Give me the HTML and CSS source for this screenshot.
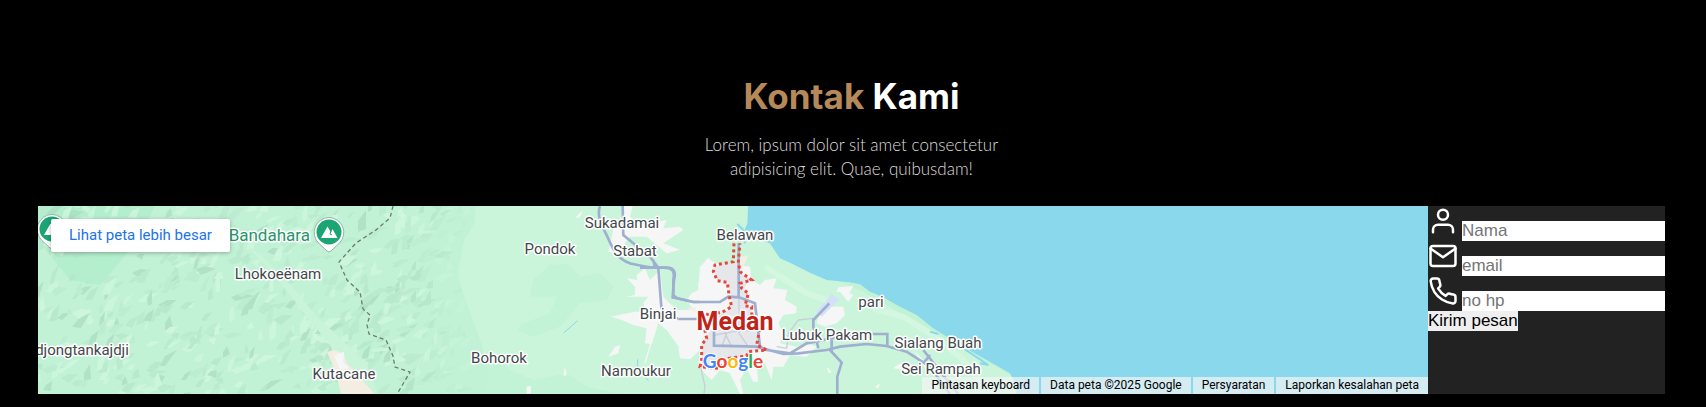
FILE: index.html
```html
<!DOCTYPE html>
<html lang="id">
<head>
<meta charset="utf-8">
<meta name="viewport" content="width=device-width, initial-scale=1">
<title>Kontak Kami</title>
<link rel="stylesheet" href="styles.css">
</head>
<body>
<section class="contact" id="contact">
  <h2 class="contact-title"><span>Kontak</span> Kami</h2>
  <p class="contact-text">Lorem, ipsum dolor sit amet consectetur adipisicing elit. Quae, quibusdam!</p>
  <div class="row">
    <div class="map">
      <svg class="map-canvas" viewBox="38 206 1390 188" preserveAspectRatio="xMidYMid slice" role="img" aria-label="Peta Medan">
        <defs>
          <linearGradient id="fade" x1="0" x2="1" y1="0" y2="0">
            <stop offset="0" stop-color="#fff"/><stop offset=".8" stop-color="#fff"/><stop offset="1" stop-color="#000"/>
          </linearGradient>
          <mask id="hills" maskUnits="userSpaceOnUse" x="38" y="206" width="450" height="188"><rect x="38" y="206" width="450" height="188" fill="url(#fade)"/></mask>
        </defs>
        <rect x="38" y="206" width="1390" height="188" fill="#c2f2d6"/>
        <path d="M38 206H155L140 235L120 262L100 285L70 280L50 255L38 240Z" fill="#b3eecd"/>
        <g id="terrain" mask="url(#hills)"></g>
        <!-- valley -->
        <path d="M246 245L268 268L330 345L350 394H378L366 362L318 318L290 284L262 256Z" fill="#c9f4da"/>
        <path d="M327 352L334 350L344 354L346 362L358 376L375 394H341L336 373Z" fill="#f3ede2"/>
        <path d="M334 355L344 352L343 362L349 368L340 370Z" fill="#f5f6f7"/>
        <!-- lowlands -->
        <path d="M476 206H748V224L768 243L781 259L860 290L1012 376L1018 394H486L488 372L482 345L470 312L462 290L458 272L464 240L474 225Z" fill="#caf5db"/>
        <g transform="translate(400 200) scale(.3333)">
          <path d="M400 240L450 195L500 190L540 230L600 220L640 260L620 300L540 310L480 380L400 410L350 390L370 370L450 340L470 290L390 290Z" fill="#c3f3d7"/>
          <path d="M260 450L330 510L400 540L500 520L560 560L660 582H260Z" fill="#c3f3d7"/>
          <path d="M490 400L533 362" stroke="#8ad8ec" stroke-width="3"/>
          <path d="M713 478V505L745 542" stroke="#8ad8ec" stroke-width="3" fill="none"/>
          <path d="M670 18H698L690 50L720 75L800 60L790 85L840 80L850 90L790 130L840 150L800 160L770 135L740 110L690 110L650 160L625 155L640 90L660 60ZM548 30L540 52L525 55ZM780 210L750 240L735 205L710 225L712 240L680 235L705 260L705 285L680 290L745 290L730 310L740 335L705 335L632 350L660 358L700 375L740 385L735 430L755 433L775 370L800 390L835 438L840 475L870 478L900 450L910 250L930 170L900 200L895 270L875 280L860 300L880 330L830 330L790 290ZM660 435L655 460L625 470L645 440ZM495 500L500 525L490 528ZM380 560L393 558L392 582H380Z" fill="#f6f6f7"/>
          <path d="M770 370L735 490" stroke="#f6f6f7" stroke-width="4"/>
          <path d="M600 18C588 50 610 85 622 110C640 150 650 175 690 190C720 197 740 202 765 203H800C825 203 828 220 822 240L818 292L880 306H960L990 290M668 18L670 105L700 130L750 170L775 203L784 320L790 340M760 180L765 203M818 285L830 293M830 355H900" fill="none" stroke="#9fafd0" stroke-width="8"/>
        </g>
        <g transform="translate(640 200) scale(.3333)">
          <path d="M200 175L230 190L330 200L335 240L360 255L375 240L410 235L400 265L442 270L435 300L470 320L468 340L430 345L415 370L430 400L420 430L470 440L500 430L530 440L500 470L450 465L430 500L400 500L395 540L375 490L350 500L355 545L340 545L320 505L300 540L310 582H300L270 520L240 510L215 540L175 500L180 440L140 440L110 340L180 330L175 250ZM640 258L628 280L640 285L625 305L600 275L590 275L595 262ZM545 320H610L615 345L590 370L555 380L530 370ZM820 450L850 480L880 500L870 520L850 495ZM780 490L800 510L760 505ZM720 550L715 565L705 560ZM560 500L575 515L565 520Z" fill="#f6f6f7"/>
          <path d="M290 175L325 165L318 185L300 215L290 205ZM140 325L168 322L165 335Z" fill="#f3ede2"/>
          <path d="M250 190L290 190L300 220L335 238L320 250L310 275L325 280L318 320L335 320V345L360 390L350 440L380 445L325 455L320 468L230 478L185 505L185 435L205 400L230 340L270 330L275 300L265 245L232 240L220 205Z" fill="#e5e7ea"/>
          <path d="M575 282L598 298L545 350L528 335Z" fill="#d5e0f8"/>
          <path d="M325 0L322 70L300 125L345 115L390 130L420 175L450 188L510 218L560 240L630 247L660 253L690 275L730 292L770 315L830 345L880 385L960 435L1040 480L1110 520L1128 555L1130 600H2400V0Z" fill="#8ad8ec"/>
          <path d="M375 200L430 235L500 280L560 300M700 325L790 350L870 400L960 470L1020 540" fill="none" stroke="#d3f7e1" stroke-width="18"/>
          <path d="M292 72L310 90L315 130M940 425L1045 495L1020 490M870 395L895 402" fill="none" stroke="#8ad8ec" stroke-width="6"/>
          <g fill="none" stroke="#c8cfdb" stroke-width="4">
            <path d="M297 290V400L325 440M225 405L280 395L350 390M245 440L260 400L230 370M275 440L255 400M410 440L440 445L445 400L475 360L520 355M182 500L195 560L192 582"/>
          </g>
          <path d="M0 203H70C100 203 105 215 100 240V292L160 306H240L265 290L297 292L345 310L360 440M296 130V290M115 357H180M222 390V437L350 440L430 462L475 460L560 450L600 440L680 432L740 438L800 455L870 500L930 582M360 440L380 450L450 460L500 430L640 402H742V438M520 355V380L535 445M520 360L568 310M570 450L605 488L592 530V582M850 450L905 520L955 582M850 490L870 465M575 420V455" fill="none" stroke="#9fafd0" stroke-width="8"/>
          <path d="M282 130L280 185L225 195L220 215L232 242L262 247L268 290L275 320L245 338H205L190 370L200 415L185 435V480L180 500L240 505L265 475L320 468L325 455L380 450L350 435L358 395L335 340V320L315 318L325 280L305 265L300 250L335 240L300 215L295 185L300 130" fill="none" stroke="#e8453c" stroke-width="9" stroke-dasharray="9 9"/>
        </g>
        <!-- province border -->
        <path d="M393 206L390 218L376 230L356 243L339 262L347 280L360 292L363 309L370 315L367 325L369 334L386 340L393 356L395 367L410 372L403 384L397 394" fill="none" stroke="#6c7a75" stroke-width="1.3" stroke-dasharray="4 3"/>
        <!-- park pins -->
        <g id="pin">
          <path d="M329 217.500a15 15 0 0 1 10 26L331 251q-2 2-4 0L319 243.500a15 15 0 0 1 10-26Z" fill="#fff" stroke="#95b5a5" stroke-width="1"/>
          <circle cx="329" cy="232" r="12.500" fill="#1ba574"/>
          <path d="M321 238L327.500 226.500L331 232.500L332.500 229L337.500 238Z" fill="#fff"/>
          <path d="M331 231L330 234L332 235" fill="none" stroke="#1ba574"/>
        </g>
        <use href="#pin" x="-277" y="-3"/>
        <g class="place">
          <text x="310" y="241" class="park">Bandahara</text>
          <text x="278" y="279">Lhokoeënam</text>
          <text x="82" y="355">djongtankajdji</text>
          <text x="344" y="379">Kutacane</text>
          <text x="622" y="228">Sukadamai</text>
          <text x="550" y="254">Pondok</text>
          <text x="635" y="256">Stabat</text>
          <text x="658" y="319">Binjai</text>
          <text x="499" y="363">Bohorok</text>
          <text x="636" y="376">Namoukur</text>
          <text x="745" y="240">Belawan</text>
          <text x="871" y="307">pari</text>
          <text x="827" y="340">Lubuk Pakam</text>
          <text x="938" y="348">Sialang Buah</text>
          <text x="941" y="374">Sei Rampah</text>
          <text x="735" y="330" class="city">Medan</text>
        </g>
        <text x="733" y="368" class="brand"><tspan fill="#4285f4">G</tspan><tspan fill="#ea4335">o</tspan><tspan fill="#fbbc04">o</tspan><tspan fill="#4285f4">g</tspan><tspan fill="#34a853">l</tspan><tspan fill="#ea4335">e</tspan></text>
      </svg>
      <a class="map-link" href="#contact">Lihat peta lebih besar</a>
      <div class="map-bar">
        <button type="button">Pintasan keyboard</button>
        <span>Data peta ©2025 Google</span>
        <a href="#contact">Persyaratan</a>
        <a href="#contact">Laporkan kesalahan peta</a>
      </div>
    </div>
    <form class="form">
      <div class="field">
        <label for="nama" aria-label="Nama"><svg class="icon" viewBox="0 0 24 24"><path d="M20 21v-2a4 4 0 0 0-4-4H8a4 4 0 0 0-4 4v2"/><circle cx="12" cy="7" r="4"/></svg></label>
        <input id="nama" type="text" placeholder="Nama">
      </div>
      <div class="field">
        <label for="email" aria-label="Email"><svg class="icon" viewBox="0 0 24 24"><path d="M4 4h16c1.100 0 2 .9 2 2v12c0 1.100-.9 2-2 2H4c-1.100 0-2-.9-2-2V6c0-1.100.9-2 2-2z"/><path d="M22 6l-10 7L2 6"/></svg></label>
        <input id="email" type="text" placeholder="email">
      </div>
      <div class="field">
        <label for="hp" aria-label="No HP"><svg class="icon" viewBox="0 0 24 24"><path d="M22 16.920v3a2 2 0 0 1-2.180 2 19.790 19.790 0 0 1-8.630-3.070 19.500 19.500 0 0 1-6-6 19.790 19.790 0 0 1-3.070-8.670A2 2 0 0 1 4.110 2h3a2 2 0 0 1 2 1.720 12.840 12.840 0 0 0 .7 2.810 2 2 0 0 1-.45 2.110L8.090 9.910a16 16 0 0 0 6 6l1.270-1.270a2 2 0 0 1 2.110-.45 12.840 12.840 0 0 0 2.810.7A2 2 0 0 1 22 16.920z"/></svg></label>
        <input id="hp" type="text" placeholder="no hp">
      </div>
      <button class="send" type="submit">Kirim pesan</button>
    </form>
  </div>
</section>
<script src="terrain.js"></script>
</body>
</html>
```
FILE: styles.css
```css
* {
  margin: 0;
  padding: 0;
  box-sizing: border-box;
  border: none;
  outline: none;
  text-decoration: none;
}

body {
  background: #000;
  color: #fff;
  font-family: Lato, "Open Sans", sans-serif;
}

.contact {
  padding: 72px 41px 13px 38px;
}

.contact-title {
  font-family: Inter, Lato, sans-serif;
  font-size: 35px;
  font-weight: 700;
  line-height: 48px;
  text-align: center;
}

.contact-title span {
  color: #b6895b;
}

.contact-text {
  max-width: 320px;
  margin: 13px auto 25px;
  color: #ddd;
  font-size: 17px;
  font-weight: 300;
  line-height: 24px;
  text-align: center;
}

.row {
  display: flex;
  background: #222;
}

.map {
  position: relative;
  flex: 1;
  min-width: 0;
  min-height: 188px;
  overflow: hidden;
  font-family: Roboto, sans-serif;
}

.map-canvas {
  position: absolute;
  inset: 0;
  width: 100%;
  height: 100%;
}

#terrain {
  opacity: .7;
}

.place text {
  font-size: 15px;
  text-anchor: middle;
  fill: #43474b;
  stroke: #fff;
  stroke-width: 3px;
  stroke-linejoin: round;
  paint-order: stroke;
}

.place .park {
  font-size: 17px;
  text-anchor: end;
  fill: #27956b;
}

.place .city {
  font-size: 25px;
  font-weight: 700;
  fill: #c02418;
}

.brand {
  font-family: Lato, sans-serif;
  font-size: 19px;
  font-weight: 700;
  text-anchor: middle;
  stroke: #fff;
  stroke-width: 2px;
  paint-order: stroke;
}

.map-link {
  position: absolute;
  top: 13px;
  left: 13px;
  padding: 0 18px;
  border-radius: 2px;
  background: #fff;
  box-shadow: 0 1px 4px rgba(0, 0, 0, .3);
  color: #1a73e8;
  font-size: 15px;
  line-height: 33px;
}

.map-bar {
  position: absolute;
  right: 0;
  bottom: 0;
  display: flex;
  gap: 2px;
  font-size: 12px;
  line-height: 17px;
}

.map-bar > * {
  padding: 0 9px;
  background: rgba(245, 245, 245, .7);
  color: #000;
  font: inherit;
}

.form {
  flex: 0 0 237px;
  min-width: 0;
}

.field {
  display: flex;
  align-items: flex-end;
  gap: 4px;
  height: 35px;
}

.field label {
  align-self: flex-start;
}

.icon {
  display: block;
  width: 30px;
  height: 30px;
  fill: none;
  stroke: #fff;
  stroke-width: 2;
  stroke-linecap: round;
  stroke-linejoin: round;
}

.field input,
.send {
  height: 20px;
  font-family: "Liberation Sans", Arial, sans-serif;
  font-size: 17px;
  line-height: 20px;
}

.field input {
  flex: 1;
  min-width: 0;
  background: #fff;
  color: #000;
}

.field input::placeholder {
  color: #757575;
}

.send {
  display: block;
  background: #efefef;
  color: #000;
}
```
FILE: terrain.js
```js
// Scatters small light and dark facets over the highlands.
const terrain = document.getElementById('terrain');
let seed = 7;
const rand = () => (seed = (seed * 16807) % 2147483647) / 2147483647;
const tones = ['#abdcc1', '#b5e6ca', '#d4f9e0', '#d0f8df', '#bbecd0', '#b8e9cd'];
let shapes = '';
for (let i = 0; i < 650; i++) {
  const x = 34 + rand() * 450;
  const y = 202 + rand() * 196;
  const a = -0.7 + (rand() - 0.5) * 1.4;
  const len = 8 + rand() * 16;
  const w = 3 + rand() * 6;
  const p = [
    [x, y],
    [x + Math.cos(a - 0.3) * len * 0.5, y + Math.sin(a - 0.3) * len * 0.5],
    [x + Math.cos(a) * len, y + Math.sin(a) * len],
    [x + Math.cos(a + 0.8) * w, y + Math.sin(a + 0.8) * w]
  ].map(q => q.map(Math.round).join(' ')).join(' ');
  shapes += `<polygon points="${p}" fill="${tones[Math.floor(rand() * tones.length)]}"/>`;
}
terrain.innerHTML = shapes;
```
